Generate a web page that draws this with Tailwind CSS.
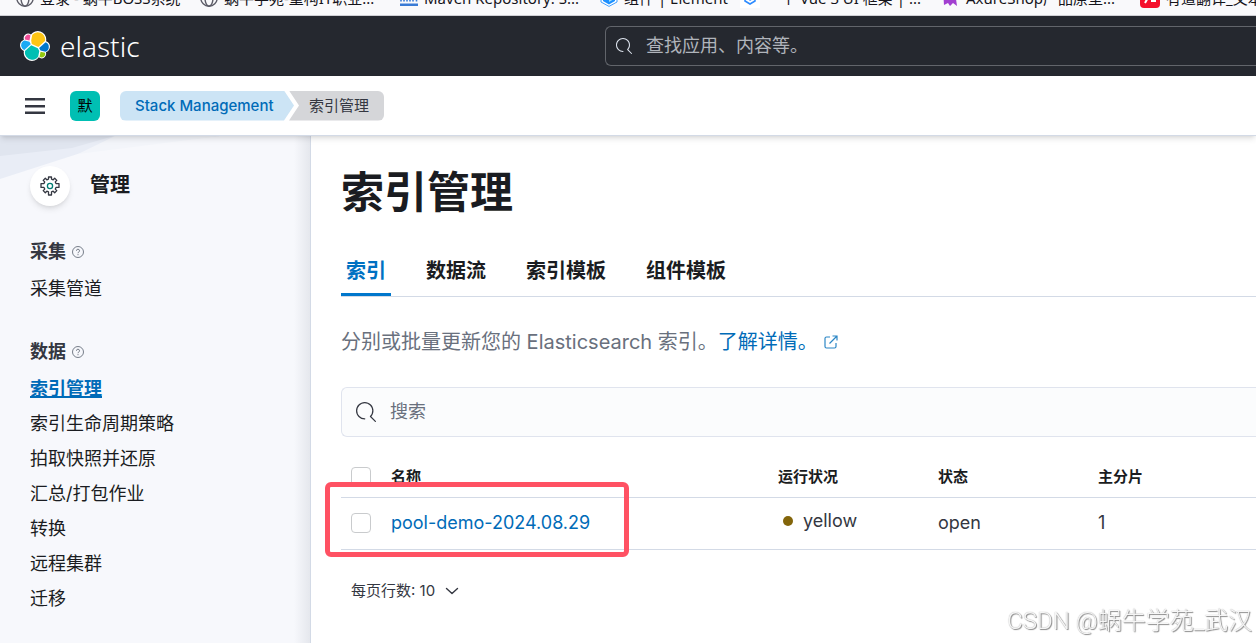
<!DOCTYPE html>
<html lang="zh-CN">
<head>
<meta charset="utf-8">
<meta name="viewport" content="width=device-width, initial-scale=1">
<title>索引管理 - Elastic</title>
<script src="https://cdn.jsdelivr.net/npm/@tailwindcss/browser@4"></script>
</head>
<body class="min-h-screen flex flex-col overflow-x-hidden bg-white text-[#343741] font-[Inter,'Noto_Sans_CJK_SC',sans-serif]">

<nav aria-label="书签" class="h-4 shrink-0 overflow-hidden flex items-end bg-[#f9f9fb] border-b border-[#cfcfd4] pl-4 text-[15px] leading-5 text-[#15141a] whitespace-nowrap font-['Noto_Sans','Noto_Sans_CJK_SC',sans-serif]">
  <a href="#" class="w-[184px] shrink-0 flex items-center gap-1.5 pb-[7px]">
    <svg class="size-[18px] shrink-0" viewBox="0 0 18 18" fill="none" stroke="#5b5b66" stroke-width="1.4"><circle cx="9" cy="9" r="8.2"/><ellipse cx="9" cy="9" rx="4" ry="8.2"/><path d="M1 9h16"/></svg>
    <span>登录 - 蜗牛BOSS系统</span></a>
  <a href="#" class="w-[200px] shrink-0 flex items-center gap-1.5 pb-[7px]">
    <svg class="size-[18px] shrink-0" viewBox="0 0 18 18" fill="none" stroke="#5b5b66" stroke-width="1.4"><circle cx="9" cy="9" r="8.2"/><ellipse cx="9" cy="9" rx="4" ry="8.2"/><path d="M1 9h16"/></svg>
    <span>蜗牛学苑-重构IT职业...</span></a>
  <a href="#" class="w-[200px] shrink-0 flex items-center gap-1.5 pb-[7px]">
    <svg class="size-[18px] shrink-0" viewBox="0 0 18 18"><path d="M0 14.500h18v2.500H0z" fill="#3a7bd5"/><path d="M1 12.500V6M4 12.500V6M7 12.500V6M10 12.500V6M13 12.500V6M16.500 12.500V6" stroke="#3a7bd5" stroke-width="1.600"/></svg>
    <span>Maven Repository: S...</span></a>
  <a href="#" class="w-[140px] shrink-0 flex items-center gap-1.5 pb-[7px]">
    <svg class="size-[18px] shrink-0" viewBox="0 0 18 18"><path d="M9 1l8 4v8l-8 4.400-8-4.400V5z" fill="#fff" stroke="#409eff"/><path d="M9 3l6 3v6l-6 3.400-6-3.400V6z" fill="#1e90ff"/><path d="M9 11l5-3v2l-5 3z" fill="#9fe0f5"/></svg>
    <span>组件 | Element</span></a>
  <a href="#" class="w-[202px] shrink-0 flex items-center gap-1.5 pb-[7px]">
    <svg class="size-5 shrink-0" viewBox="0 0 20 20"><path d="M0 0h20v20H0z" fill="#fff"/><path d="M5 7v6l5 3 5-3V7" fill="none" stroke="#2f8cff" stroke-width="1.600"/><path d="M10 9l3 2-3 2-2-2z" fill="#2f8cff"/></svg>
    <span>一个 Vue 3 UI 框架 | ...</span></a>
  <a href="#" class="w-[198px] shrink-0 flex items-center gap-1.5 pb-[7px]">
    <svg class="size-[18px] shrink-0" viewBox="0 0 18 18"><path d="M1 1h14l-1 9 1 7-4-3-3 3-2-3-4 2z" fill="#a23fd0"/></svg>
    <span>AxureShop产品原型...</span></a>
  <a href="#" class="shrink-0 flex items-center gap-1.5 pb-[7px]">
    <svg class="size-5 shrink-0" viewBox="0 0 20 20"><rect width="20" height="20" rx="4" fill="#f5102c"/><path d="M5 15l5-9M12 6v7h4" fill="none" stroke="#fff" stroke-width="2"/></svg>
    <span>有道翻译_文本...</span></a>
</nav>

<header class="h-[60px] shrink-0 flex items-center bg-[#25282f] pl-5">
  <a href="#" aria-label="elastic" class="w-[585px] shrink-0 flex items-center gap-2.5 text-white">
    <svg class="size-[30px]" viewBox="0 0 32 32">
      <path fill="#FFF" d="M32 16.770a6.334 6.334 0 0 0-1.140-3.630 6.269 6.269 0 0 0-3.010-2.330 9.080 9.080 0 0 0 .160-1.710 9.095 9.095 0 0 0-1.730-5.330A9.040 9.040 0 0 0 21.740.450a8.970 8.970 0 0 0-5.590.040 9.040 9.040 0 0 0-4.470 3.370 4.841 4.841 0 0 0-5.860-.080 4.863 4.863 0 0 0-1.670 5.440A6.420 6.420 0 0 0 1.140 11.570 6.420 6.420 0 0 0 0 15.220a6.330 6.330 0 0 0 1.150 3.650 6.270 6.270 0 0 0 3.020 2.330 9.020 9.020 0 0 0 5.850 10.350 8.980 8.980 0 0 0 5.590-.050 9.030 9.030 0 0 0 4.450-3.380 4.834 4.834 0 0 0 5.850.090 4.850 4.850 0 0 0 1.670-5.430 6.410 6.410 0 0 0 3.020-2.340A6.410 6.410 0 0 0 32 16.770z"/>
      <path fill="#FEC514" d="M12.580 13.790l7.010 3.210 7.070-6.210a7.849 7.849 0 0 0 .150-1.560 7.930 7.930 0 0 0-1.390-4.480 7.880 7.880 0 0 0-3.660-2.910 7.850 7.850 0 0 0-8.660 2.240l-1.180 6.120z"/>
      <path fill="#00BFB3" d="M5.330 21.210a8 8 0 0 0 1.240 6.080 7.920 7.920 0 0 0 8.730 2.980 7.900 7.900 0 0 0 4.100-2.800l1.170-6.100-1.560-2.990-7.040-3.210z"/>
      <path fill="#F04E98" d="M5.290 9.050l4.810 1.140 1.050-5.470a3.792 3.792 0 0 0-5.860 4.330z"/>
      <path fill="#1BA9F5" d="M4.870 10.200A5.370 5.370 0 0 0 1.240 15.220a5.380 5.380 0 0 0 3.420 4.950l6.740-6.090-1.240-2.650z"/>
      <path fill="#93C90E" d="M20.870 27.470a3.790 3.790 0 0 0 5.850-4.320l-4.800-1.130z"/>
      <path fill="#07C" d="M21.850 20.780l5.280 1.230a5.370 5.370 0 0 0 3.630-5.020 5.370 5.370 0 0 0-3.440-4.930l-6.900 6.040z"/>
    </svg>
    <span class="text-[28px] leading-[34px] font-light font-['Noto_Sans',sans-serif]">elastic</span>
  </a>
  <label class="flex-1 h-10 flex items-center gap-3.5 rounded-l-md border border-r-0 border-[#62656b] pl-2.5">
    <svg class="size-4 shrink-0" viewBox="0 0 16 16" fill="#dfe5ef"><path d="M11.271 11.978l3.872 3.873a.502.502 0 0 0 .708 0 .502.502 0 0 0 0-.708l-3.565-3.564c2.380-2.747 2.267-6.923-.342-9.532-2.730-2.730-7.170-2.730-9.898 0-2.728 2.729-2.728 7.170 0 9.900a6.955 6.955 0 0 0 4.949 2.050.5.5 0 0 0 0-1 5.960 5.960 0 0 1-4.242-1.757 6.010 6.010 0 0 1 0-8.486 6.004 6.004 0 0 1 8.484 0 6.010 6.010 0 0 1 0 8.486.5.500 0 0 0 .034.738z"/></svg>
    <input type="search" aria-label="查找" placeholder="查找应用、内容等。" class="flex-1 min-w-0 bg-transparent outline-none text-lg leading-6 text-white placeholder:text-[#b0b4bb]">
  </label>
</header>

<div class="relative z-10 h-[60px] shrink-0 flex items-center gap-5 bg-white border-b border-[#d3dae6] px-5 shadow-md">
  <button aria-label="菜单" class="w-[30px] h-[30px] flex items-center justify-center">
    <svg class="size-5" viewBox="0 0 20 20" fill="#343741"><path d="M0 2h20v2.500H0zM0 9h20v2.500H0zM0 15.500h20V18H0z"/></svg>
  </button>
  <button aria-label="默认空间" class="size-[30px] rounded-md bg-[#00bfb3] text-black text-[15px] leading-5">默</button>
  <nav aria-label="面包屑" class="flex text-[15px] leading-[30px]">
    <a href="#" class="h-[30px] w-[174px] pl-[15px] rounded-l-md bg-[#cce4f5] text-[#006bb8] font-medium [clip-path:polygon(0_0,164px_0,100%_50%,164px_100%,0_100%)]">Stack Management</a>
    <span class="-ml-[5px] h-[30px] pl-5 pr-[15px] rounded-r-md bg-[#d5d6d9] text-[#343741] [clip-path:polygon(0_0,100%_0,100%_100%,0_100%,10px_50%)]">索引管理</span>
  </nav>
</div>

<div class="flex-1 flex">
  <aside class="relative w-[311px] shrink-0 bg-[#f7f8fc] border-r border-[#d3dae6] pl-[30px] pt-[30px]">
    <svg class="absolute left-0 top-0 w-[220px] h-[46px]" viewBox="0 0 220 46"><path d="M0 0h220L90 14 0 43z" fill="#e9edf6"/><path d="M78 18L115 0h105z" fill="#f3f5fa"/><path d="M0 0h114L72 12 0 20z" fill="#e0e5ef"/></svg>
    <div class="absolute inset-y-0 right-0 w-4 bg-linear-to-r from-transparent to-[#d9dce3]/60"></div>
    <div class="relative flex items-center gap-5">
      <span class="size-10 rounded-full bg-white shadow-md flex items-center justify-center">
        <svg class="size-5" viewBox="0 0 20 20" fill="none"><path d="M8.500 1h3v2.100l1.700.7 1.500-1.500 2.100 2.100-1.500 1.500.7 1.700H19v3.800h-3l-.7 1.700 1.500 1.500-2.100 2.100-1.500-1.500-1.700.7V19h-3v-3.100l-1.700-.7-1.500 1.500-2.100-2.100 1.500-1.500-.7-1.700H1V7.600h3l.7-1.700-1.500-1.500 2.100-2.100 1.500 1.500 1.700-.7z" stroke="#343741" stroke-width="1.300" stroke-linejoin="round"/><circle cx="10" cy="10" r="2.600" stroke="#017d73" stroke-width="1.300"/></svg>
      </span>
      <h2 class="pb-0.5 text-xl leading-6 font-bold text-[#1a1c21]">管理</h2>
    </div>
    <section class="relative mt-8">
      <h3 class="flex items-center gap-1.5 text-lg leading-7 font-bold">采集
        <svg class="size-3" viewBox="0 0 12 12" fill="none" stroke="#69707d"><circle cx="6" cy="6" r="5.500" stroke-width=".9"/><path d="M4.500 4.700a1.500 1.500 0 1 1 2.100 1.400Q6 6.400 6 7.200M6 8.200v1"/></svg></h3>
      <a href="#" class="block mt-[9px] text-lg leading-7 text-[#1a1c21]">采集管道</a>
    </section>
    <section class="relative mt-[35px]">
      <h3 class="flex items-center gap-1.5 text-lg leading-7 font-bold">数据
        <svg class="size-3" viewBox="0 0 12 12" fill="none" stroke="#69707d"><circle cx="6" cy="6" r="5.500" stroke-width=".9"/><path d="M4.500 4.700a1.500 1.500 0 1 1 2.100 1.400Q6 6.400 6 7.200M6 8.200v1"/></svg></h3>
      <ul class="mt-[9px] flex flex-col gap-[7px] text-lg leading-7 text-[#1a1c21]">
        <li><a href="#" class="font-bold text-[#006bb8] underline decoration-2 underline-offset-1">索引管理</a></li>
        <li><a href="#">索引生命周期策略</a></li>
        <li><a href="#">拍取快照并还原</a></li>
        <li><a href="#">汇总/打包作业</a></li>
        <li><a href="#">转换</a></li>
        <li><a href="#">远程集群</a></li>
        <li><a href="#">迁移</a></li>
      </ul>
    </section>
  </aside>

  <main class="flex-1 min-w-0 pl-[30px] pt-7">
    <h1 class="text-[43px] leading-[56px] font-bold text-[#1a1c21]">索引管理</h1>
    <div role="tablist" class="mt-[26px] flex gap-[30px] border-b border-[#d3dae6] text-xl leading-6 font-bold text-[#1a1c21]">
      <button role="tab" aria-selected="true" class="h-[50px] -mb-px px-[5px] pt-[3px] border-b-3 border-[#0077cc] text-[#0071c2]">索引</button>
      <button role="tab" class="h-[50px] px-[5px]">数据流</button>
      <button role="tab" class="h-[50px] px-[5px]">索引模板</button>
      <button role="tab" class="h-[50px] px-[5px]">组件模板</button>
    </div>
    <p class="mt-[30px] flex items-center text-xl leading-[30px] text-[#69707d]">分别或批量更新您的 Elasticsearch 索引。<a href="#" class="flex items-center gap-1.5 text-[#006bb8]">了解详情。
      <svg class="size-3.5" viewBox="0 0 14 14" fill="none" stroke="#2b86c5" stroke-width="1.200"><path d="M6 2H2.500Q1 2 1 3.500v8Q1 13 2.500 13h8q1.500 0 1.500-1.500V8M5.500 8.500L13 1M8.500 1H13v4.500"/></svg></a></p>
    <label class="mt-[30px] h-[50px] flex items-center gap-3.5 rounded-l-md border border-r-0 border-[#e0e4ee] bg-[#fbfcfd] pl-3.5">
      <svg class="size-5 shrink-0" viewBox="0 0 16 16" fill="#343741"><path d="M11.271 11.978l3.872 3.873a.502.502 0 0 0 .708 0 .502.502 0 0 0 0-.708l-3.565-3.564c2.380-2.747 2.267-6.923-.342-9.532-2.730-2.730-7.170-2.730-9.898 0-2.728 2.729-2.728 7.170 0 9.900a6.955 6.955 0 0 0 4.949 2.050.5.500 0 0 0 0-1 5.960 5.960 0 0 1-4.242-1.757 6.010 6.010 0 0 1 0-8.486 6.004 6.004 0 0 1 8.484 0 6.010 6.010 0 0 1 0 8.486.5.500 0 0 0 .034.738z"/></svg>
      <input type="search" aria-label="搜索" placeholder="搜索" class="flex-1 min-w-0 bg-transparent outline-none text-lg leading-6 placeholder:text-[#69707d]">
    </label>
    <div class="relative mt-5">
      <table class="w-full table-fixed border-collapse text-left">
        <colgroup><col class="w-[50px]"><col><col class="w-[160px]"><col class="w-[160px]"><col class="w-[158px]"></colgroup>
        <thead>
          <tr class="h-10 border-b border-[#d3dae6] text-[15px] leading-5 text-[#1a1c21]">
            <th class="pl-2.5"><input type="checkbox" aria-label="全选" class="block size-5 appearance-none rounded-sm border border-[#c9cbcd] bg-white"></th>
            <th>名称</th><th>运行状况</th><th>状态</th><th>主分片</th>
          </tr>
        </thead>
        <tbody>
          <tr class="h-[52px] border-b border-[#d3dae6] text-lg leading-6">
            <td class="pl-2.5"><input type="checkbox" aria-label="选择 pool-demo-2024.08.29" class="block size-5 appearance-none rounded-sm border border-[#c9cbcd] bg-white"></td>
            <td><a href="#" class="text-[#006bb8]">pool-demo-2024.08.29</a></td>
            <td><span class="flex items-center gap-2.5 pl-[5px] pb-1"><span class="size-2.5 rounded-full bg-[#83650a]"></span>yellow</span></td>
            <td>open</td><td>1</td>
          </tr>
        </tbody>
      </table>
      <div class="absolute -left-4 top-[25px] w-[304px] h-[75px] rounded-md border-5 border-[#ff5163] pointer-events-none"></div>
    </div>
    <button class="mt-[30px] ml-2.5 flex items-center gap-2.5 text-[15px] leading-[22px]">每页行数: 10
      <svg class="w-3.5 h-2" viewBox="0 0 14 8" fill="none" stroke="#343741" stroke-width="1.400" stroke-linecap="round" stroke-linejoin="round"><path d="M1.500 1.500L7 6.500l5.500-5"/></svg></button>
  </main>
</div>

<div class="fixed right-1 bottom-1 text-2xl leading-9 text-white/90 [text-shadow:1px_1px_1px_#888,0_0_1px_#999] whitespace-nowrap font-[Roboto,'Noto_Sans_CJK_SC',sans-serif] font-light">CSDN @蜗牛学苑_武汉</div>
</body>
</html>
